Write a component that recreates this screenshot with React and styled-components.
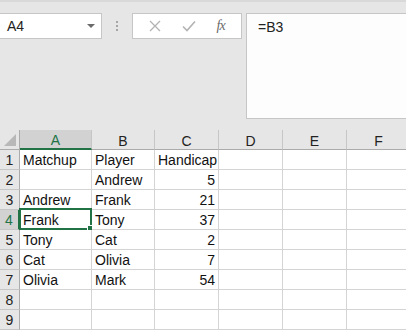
import { Fragment } from "react";
import styled, { createGlobalStyle } from "styled-components";

const GlobalStyle = createGlobalStyle`
  html, body {
    margin: 0;
    padding: 0;
    background: #e6e6e6;
    overflow: hidden;
  }
  body {
    font-family: "Liberation Sans", Arial, sans-serif;
    width: 406px;
    height: 330px;
  }
`;

const Container = styled.div`
  width: 406px;
  height: 330px;
  background: #e6e6e6;
  border-top: 2px solid #d9d9d9;
  box-sizing: border-box;
  overflow: hidden;
`;

const Toolbar = styled.div`
  display: flex;
  align-items: flex-start;
  padding-top: 11px;
  height: 117px;
  box-sizing: border-box;
`;

const NameBox = styled.div`
  width: 102px;
  height: 26px;
  box-sizing: border-box;
  background: #ffffff;
  border: 1px solid #c6c6c6;
  border-left: none;
  display: flex;
  align-items: center;
  justify-content: space-between;
  padding: 0 6px 0 7px;
  font-size: 14px;
  color: #222;
`;

const Caret = styled.span`
  width: 0;
  height: 0;
  border-left: 4px solid transparent;
  border-right: 4px solid transparent;
  border-top: 4px solid #6b6b6b;
`;

const Grip = styled.div`
  width: 30px;
  height: 26px;
  display: flex;
  flex-direction: column;
  align-items: center;
  justify-content: center;
  gap: 2px;
`;

const Dot = styled.span`
  width: 2px;
  height: 2px;
  background: #a6a6a6;
`;

const Buttons = styled.div`
  width: 110px;
  height: 26px;
  box-sizing: border-box;
  background: #ffffff;
  border: 1px solid #c6c6c6;
  display: flex;
  align-items: center;
  justify-content: space-around;
  padding: 0 6px;
`;

const Fx = styled.span`
  font-family: "Liberation Serif", "Times New Roman", serif;
  font-style: italic;
  font-size: 14px;
  color: #6a6a6a;
  letter-spacing: -1px;
`;

const FormulaBar = styled.div`
  flex: 1;
  margin-left: 4px;
  height: 106px;
  box-sizing: border-box;
  background: #fdfdfd;
  border: 1px solid #c6c6c6;
  border-right: none;
  padding: 5px 11px;
  font-size: 14px;
  color: #222;
`;

const Sheet = styled.div`
  display: grid;
  grid-template-columns: 20px 72px 63px 64px 64px 64px 64px;
  grid-auto-rows: 20px;
  margin-top: 11px;
  width: 411px;
`;

const Corner = styled.div`
  background: #e6e6e6;
  border-right: 1px solid #ababab;
  border-bottom: 1px solid #ababab;
  box-sizing: border-box;
  position: relative;
  &::after {
    content: "";
    position: absolute;
    right: 3px;
    bottom: 3px;
    border-left: 12px solid transparent;
    border-bottom: 12px solid #b8b8b8;
  }
`;

const ColHead = styled.div`
  background: ${(p) => (p.$active ? "#d2d2d2" : "#e6e6e6")};
  color: ${(p) => (p.$active ? "#217346" : "#222")};
  border-right: 1px solid #c6c6c6;
  border-bottom: ${(p) => (p.$active ? "2px solid #217346" : "1px solid #ababab")};
  box-sizing: border-box;
  font-size: 14px;
  display: flex;
  align-items: center;
  justify-content: center;
  padding-top: 2px;
`;

const RowHead = styled.div`
  background: ${(p) => (p.$active ? "#d2d2d2" : "#e6e6e6")};
  color: ${(p) => (p.$active ? "#217346" : "#222")};
  border-right: ${(p) => (p.$active ? "2px solid #217346" : "1px solid #ababab")};
  border-bottom: 1px solid #c6c6c6;
  box-sizing: border-box;
  font-size: 14px;
  display: flex;
  align-items: center;
  justify-content: center;
  padding-top: 1px;
`;

const Cell = styled.div`
  background: #ffffff;
  border-right: 1px solid #d4d4d4;
  border-bottom: 1px solid #d4d4d4;
  box-sizing: border-box;
  font-size: 14px;
  color: #111;
  line-height: 20px;
  padding: 0 3px;
  white-space: nowrap;
  overflow: visible;
  text-align: ${(p) => (p.$num ? "right" : "left")};
  position: relative;
`;

const Selection = styled.div`
  position: absolute;
  left: -1px;
  top: -2px;
  right: -1px;
  bottom: -1px;
  border: 2px solid #217346;
  pointer-events: none;
  &::after {
    content: "";
    position: absolute;
    right: -4px;
    bottom: -4px;
    width: 5px;
    height: 5px;
    background: #217346;
    border: 1px solid #fff;
  }
`;

const columns = ["A", "B", "C", "D", "E", "F"];

const rows = [
  ["Matchup", "Player", "Handicap"],
  ["", "Andrew", 5],
  ["Andrew", "Frank", 21],
  ["Frank", "Tony", 37],
  ["Tony", "Cat", 2],
  ["Cat", "Olivia", 7],
  ["Olivia", "Mark", 54],
  ["", "", ""],
  ["", "", ""],
];

const CloseIcon = () => (
  <svg width="12" height="12" viewBox="0 0 12 12">
    <path d="M1 1L11 11M11 1L1 11" stroke="#b3b3b3" strokeWidth="1.3" fill="none" />
  </svg>
);

const CheckIcon = () => (
  <svg width="14" height="12" viewBox="0 0 14 12">
    <path d="M1 6.5L5 10.5L13 1.5" stroke="#b3b3b3" strokeWidth="1.6" fill="none" />
  </svg>
);

const App = () => {
  return (
    <Container>
      <GlobalStyle />
      <Toolbar>
        <NameBox>
          <span>A4</span>
          <Caret />
        </NameBox>
        <Grip>
          <Dot />
          <Dot />
          <Dot />
        </Grip>
        <Buttons>
          <CloseIcon />
          <CheckIcon />
          <Fx>fx</Fx>
        </Buttons>
        <FormulaBar>=B3</FormulaBar>
      </Toolbar>
      <Sheet>
        <Corner />
        {columns.map((c) => (
          <ColHead key={c} $active={c === "A"}>
            {c}
          </ColHead>
        ))}
        {rows.map((row, i) => (
          <Fragment key={i}>
            <RowHead $active={i === 3}>{i + 1}</RowHead>
            {columns.map((c, j) => {
              const value = row[j] ?? "";
              return (
                <Cell key={c} $num={typeof value === "number"}>
                  {value}
                  {i === 3 && j === 0 && <Selection />}
                </Cell>
              );
            })}
          </Fragment>
        ))}
      </Sheet>
    </Container>
  );
};

export default App;
